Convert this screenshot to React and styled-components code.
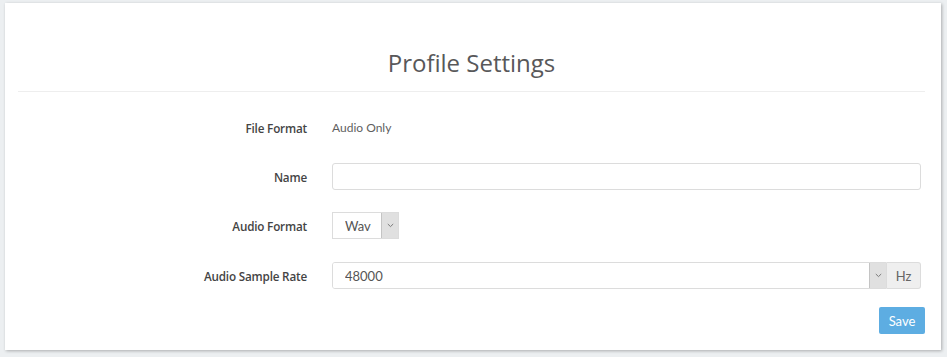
import React from "react";
import styled, { createGlobalStyle } from "styled-components";

const Global = createGlobalStyle`
  html, body { margin: 0; padding: 0; background: #eceff1; }
  body { font-family: "Lato", "Open Sans", sans-serif; }
  * { box-sizing: border-box; }
`;

const Page = styled.div`
  padding: 3px 6px 7px 5px;
`;

const Card = styled.div`
  background: #fff;
  box-shadow: 1px 1px 3px rgba(0, 0, 0, 0.28);
  padding: 0 16px 16px 13px;
`;

const Header = styled.div`
  padding: 43px 0 11px;
  border-bottom: 1px solid #eeeeee;
  text-align: center;
`;

const Title = styled.h2`
  margin: 0;
  font-family: "Open Sans", sans-serif;
  font-weight: 400;
  font-size: 24px;
  line-height: 34px;
  color: #58585a;
`;

const Form = styled.form`
  display: flex;
  flex-direction: column;
  gap: 22px;
  padding: 22px 4px 0 0;
`;

const Row = styled.div`
  display: grid;
  grid-template-columns: 289px 1fr;
  column-gap: 25px;
  align-items: center;
  height: 27px;
  margin-top: ${(p) => p.$shift || 0}px;
`;

const Label = styled.label`
  font-family: "Open Sans", sans-serif;
  font-weight: 600;
  font-size: 11.7px;
  letter-spacing: -0.18px;
  color: #444;
  text-align: right;
`;

const Static = styled.div`
  font-family: "Lato", sans-serif;
  font-size: 12px;
  color: #5f5f5f;
`;

const TextInput = styled.input`
  height: 27px;
  width: 100%;
  border: 1px solid #dcdcdc;
  border-radius: 3px;
  padding: 0 12px;
  font-family: "Lato", sans-serif;
  font-size: 13px;
  outline: none;
`;

const SelectBox = styled.div`
  display: flex;
  height: 27px;
  width: ${(p) => (p.$full ? "100%" : "67px")};
  border: 1px solid #dcdcdc;
  border-radius: ${(p) => (p.$addon ? "3px 0 0 3px" : "0")};
  overflow: hidden;
`;

const Select = styled.select`
  flex: 1;
  min-width: 0;
  appearance: none;
  border: none;
  background: #fff;
  padding: 0 0 0 12px;
  font-family: "Lato", sans-serif;
  font-size: 13px;
  color: #555;
  outline: none;
`;

const Arrow = styled.div`
  width: 17px;
  flex: none;
  background: #e0e0e0;
  border-left: 1px solid #c4c4c4;
  display: flex;
  align-items: center;
  justify-content: center;
`;

const Group = styled.div`
  display: flex;
  width: 100%;
`;

const Addon = styled.div`
  width: 34px;
  height: 27px;
  flex: none;
  background: #efefef;
  border: 1px solid #dcdcdc;
  border-left: none;
  border-radius: 0 3px 3px 0;
  display: flex;
  align-items: center;
  justify-content: center;
  font-family: "Lato", sans-serif;
  font-size: 13px;
  color: #666;
`;

const Actions = styled.div`
  display: flex;
  justify-content: flex-end;
  margin-top: 18px;
`;

const SaveButton = styled.button`
  width: 46px;
  height: 27px;
  border: none;
  border-radius: 2px;
  background: #5dade2;
  color: #fff;
  font-family: "Lato", sans-serif;
  font-size: 13px;
  padding: 0;
  cursor: pointer;
`;

const Chevron = () => (
  <svg width="7" height="5" viewBox="0 0 7 5">
    <path d="M0.8 1 L3.5 3.6 L6.2 1" fill="none" stroke="#7a7a7a" strokeWidth="1" />
  </svg>
);

export default function App() {
  return (
    <Page>
      <Global />
      <Card>
        <Header>
          <Title>Profile Settings</Title>
        </Header>
        <Form onSubmit={(e) => e.preventDefault()}>
          <Row>
            <Label>File Format</Label>
            <Static>Audio Only</Static>
          </Row>
          <Row>
            <Label>Name</Label>
            <TextInput type="text" />
          </Row>
          <Row>
            <Label>Audio Format</Label>
            <SelectBox>
              <Select defaultValue="wav">
                <option value="wav">Wav</option>
                <option value="mp3">Mp3</option>
              </Select>
              <Arrow>
                <Chevron />
              </Arrow>
            </SelectBox>
          </Row>
          <Row $shift={1}>
            <Label>Audio Sample Rate</Label>
            <Group>
              <SelectBox $full $addon>
                <Select defaultValue="48000">
                  <option value="44100">44100</option>
                  <option value="48000">48000</option>
                </Select>
                <Arrow>
                  <Chevron />
                </Arrow>
              </SelectBox>
              <Addon>Hz</Addon>
            </Group>
          </Row>
        </Form>
        <Actions>
          <SaveButton type="button">Save</SaveButton>
        </Actions>
      </Card>
    </Page>
  );
}
